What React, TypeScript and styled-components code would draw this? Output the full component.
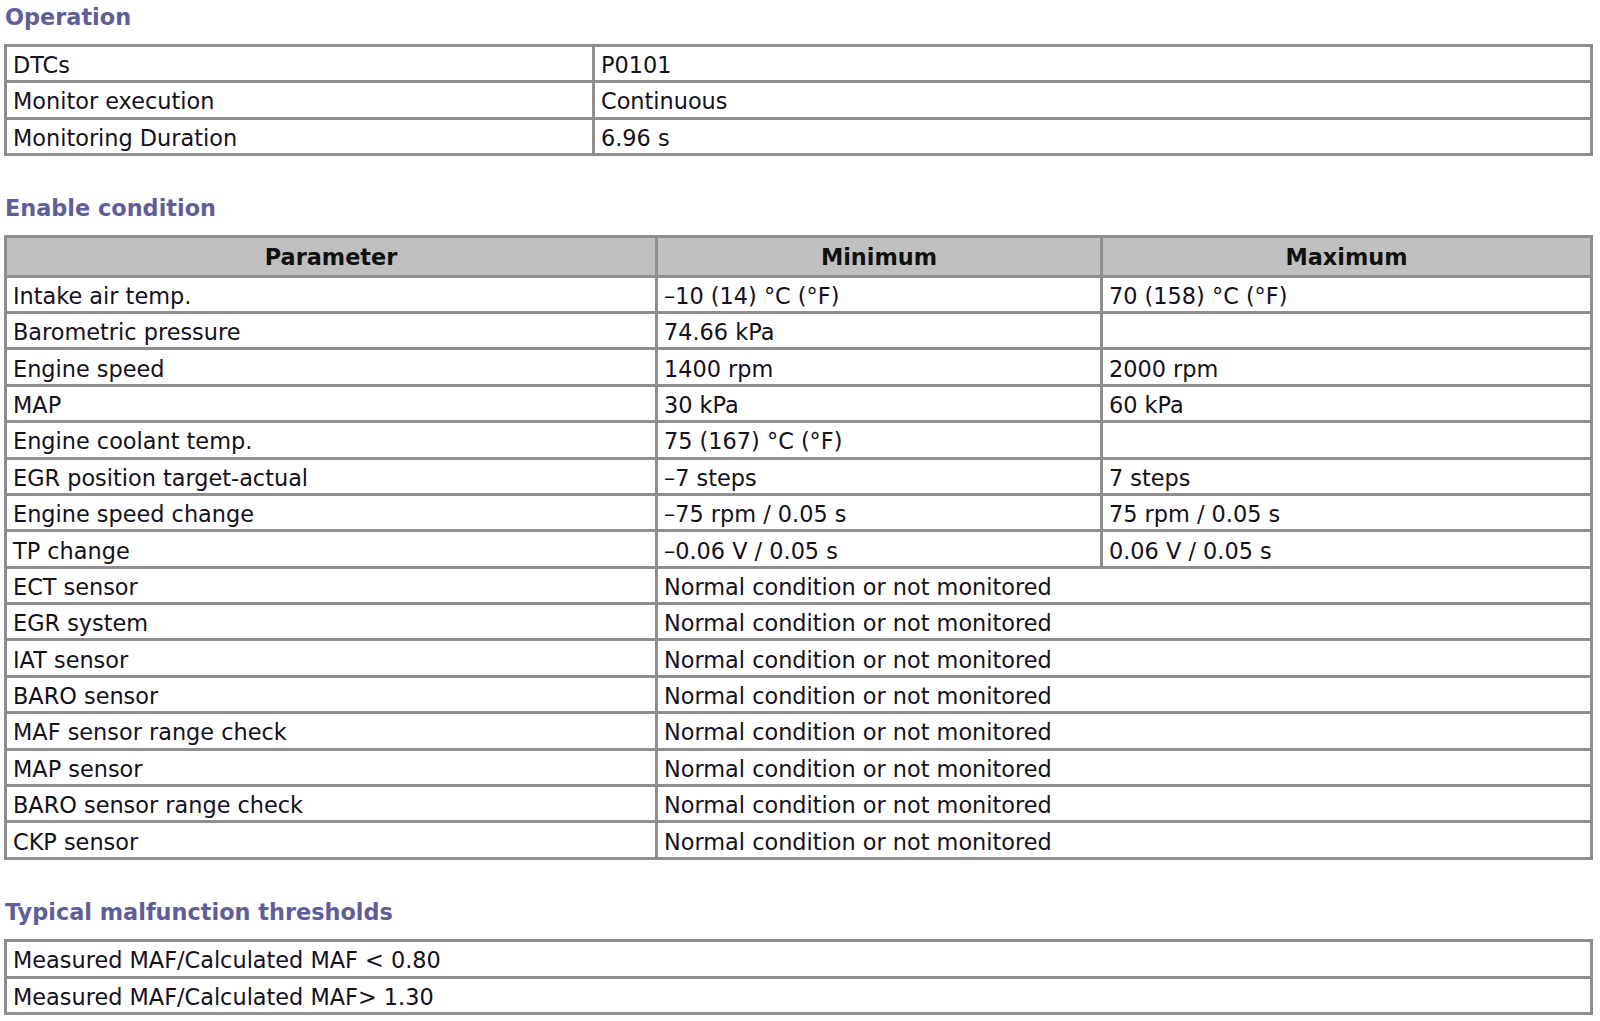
import React from "react";
import styled, { createGlobalStyle } from "styled-components";

const Global = createGlobalStyle`
  html, body { margin: 0; padding: 0; background: #ffffff; }
  body { font-family: "DejaVu Sans", Verdana, sans-serif; color: #111111; }
`;

const Page = styled.div`
  display: flex;
  flex-direction: column;
  padding: 0 7px 0 4px;
`;

const Heading = styled.h2<{ $first?: boolean }>`
  margin: ${(p) => (p.$first ? "0" : "35px")} 0 10px 1px;
  height: 34px;
  line-height: 34px;
  font-size: 22.4px;
  font-weight: bold;
  color: #5e5e99;
`;

const Table = styled.table`
  width: 100%;
  border-collapse: collapse;
  border: 3px solid #8e8e8e;
  table-layout: fixed;
  font-size: 22.4px;
`;

const HeadCell = styled.th`
  height: 34.7px;
  padding: 2px 6px 0;
  background: #c0c0c0;
  border: 3px solid #8e8e8e;
  font-weight: bold;
  text-align: center;
  vertical-align: middle;
  color: #111111;
`;

const Cell = styled.td<{ $h?: number }>`
  height: ${(p) => p.$h ?? 30.4}px;
  padding: 3px 6px 0;
  border: 3px solid #8e8e8e;
  vertical-align: middle;
  white-space: nowrap;
  color: #14101c;
`;

const operation: [string, string][] = [
  ["DTCs", "P0101"],
  ["Monitor execution", "Continuous"],
  ["Monitoring Duration", "6.96 s"],
];

const enableRows: [string, string, string][] = [
  ["Intake air temp.", "\u201310 (14) \u00b0C (\u00b0F)", "70 (158) \u00b0C (\u00b0F)"],
  ["Barometric pressure", "74.66 kPa", ""],
  ["Engine speed", "1400 rpm", "2000 rpm"],
  ["MAP", "30 kPa", "60 kPa"],
  ["Engine coolant temp.", "75 (167) \u00b0C (\u00b0F)", ""],
  ["EGR position target-actual", "\u20137 steps", "7 steps"],
  ["Engine speed change", "\u201375 rpm / 0.05 s", "75 rpm / 0.05 s"],
  ["TP change", "\u20130.06 V / 0.05 s", "0.06 V / 0.05 s"],
];

const normalRows = [
  "ECT sensor",
  "EGR system",
  "IAT sensor",
  "BARO sensor",
  "MAF sensor range check",
  "MAP sensor",
  "BARO sensor range check",
  "CKP sensor",
];

const thresholds = [
  "Measured MAF/Calculated MAF < 0.80",
  "Measured MAF/Calculated MAF> 1.30",
];

export default function App() {
  return (
    <>
      <Global />
      <Page>
        <Heading $first>Operation</Heading>
        <Table>
          <colgroup>
            <col style={{ width: "588px" }} />
            <col />
          </colgroup>
          <tbody>
            {operation.map(([a, b]) => (
              <tr key={a}>
                <Cell $h={30.3}>{a}</Cell>
                <Cell $h={30.3}>{b}</Cell>
              </tr>
            ))}
          </tbody>
        </Table>

        <Heading>Enable condition</Heading>
        <Table>
          <colgroup>
            <col style={{ width: "651px" }} />
            <col style={{ width: "445px" }} />
            <col />
          </colgroup>
          <thead>
            <tr>
              <HeadCell>Parameter</HeadCell>
              <HeadCell>Minimum</HeadCell>
              <HeadCell>Maximum</HeadCell>
            </tr>
          </thead>
          <tbody>
            {enableRows.map(([a, b, c]) => (
              <tr key={a}>
                <Cell>{a}</Cell>
                <Cell>{b}</Cell>
                <Cell>{c}</Cell>
              </tr>
            ))}
            {normalRows.map((a) => (
              <tr key={a}>
                <Cell>{a}</Cell>
                <Cell colSpan={2}>Normal condition or not monitored</Cell>
              </tr>
            ))}
          </tbody>
        </Table>

        <Heading>Typical malfunction thresholds</Heading>
        <Table>
          <tbody>
            {thresholds.map((t) => (
              <tr key={t}>
                <Cell $h={30.7}>{t}</Cell>
              </tr>
            ))}
          </tbody>
        </Table>
      </Page>
    </>
  );
}
